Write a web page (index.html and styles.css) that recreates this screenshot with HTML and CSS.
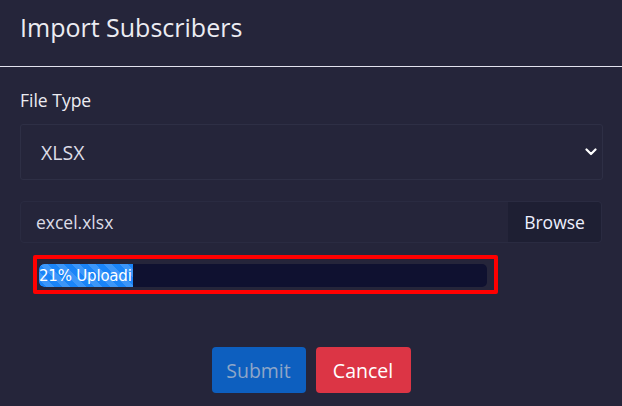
FILE: index.html
```html
<!DOCTYPE html>
<html>
<head>
<meta charset="utf-8">
<link rel="stylesheet" href="styles.css">
</head>
<body>
<div class="modal">
  <div class="header"><h1 class="title">Import Subscribers</h1></div>
  <div class="content">
    <div class="label">File Type</div>
    <div class="select">
      <span class="select-value">XLSX</span>
      <svg class="chevron" width="12" height="8" viewBox="0 0 12 8"><path d="M1.5 1.5 L6 6 L10.5 1.5" fill="none" stroke="#ffffff" stroke-width="2.2" stroke-linecap="round" stroke-linejoin="round"/></svg>
    </div>
    <div class="file">
      <span class="file-name">excel.xlsx</span>
      <span class="browse">Browse</span>
    </div>
    <div class="progress-frame">
      <div class="track">
        <div class="fill" style="width:94px"><span class="fill-text">21% Uploadi</span></div>
      </div>
    </div>
    <div class="actions">
      <button class="btn btn-submit">Submit</button>
      <button class="btn btn-cancel">Cancel</button>
    </div>
  </div>
</div>
</body>
</html>
```
FILE: styles.css
```css
html, body {
  margin: 0;
  padding: 0;
  background: #25253a;
  width: 622px;
  height: 406px;
  overflow: hidden;
}
.modal {
  font-family: "Open Sans", "Lato", sans-serif;
  color: #e6e6ee;
}
.header {
  height: 67px;
  box-sizing: border-box;
  border-bottom: 1px solid #e2e2ee;
  display: flex;
  align-items: center;
  padding: 0 20px 12px;
}
.title {
  margin: 0;
  font-size: 25px;
  line-height: 32px;
  font-weight: 400;
  color: #ececf2;
}
.content {
  padding: 0 20px;
}
.label {
  margin-top: 22px;
  font-size: 17.5px;
  line-height: 22px;
  color: #ececf2;
}
.select {
  margin-top: 13px;
  height: 56px;
  box-sizing: border-box;
  border: 1px solid #2e2f45;
  border-radius: 3px;
  display: flex;
  align-items: center;
  justify-content: space-between;
  padding: 0 5px 0 20px;
  width: 583px;
}
.select-value {
  font-size: 19.5px;
  color: #dcdce6;
}
.chevron {
  display: block;
}
.file {
  margin-top: 21px;
  height: 42px;
  width: 582px;
  box-sizing: border-box;
  border: 1px solid #2a2b41;
  border-radius: 4px;
  display: flex;
  align-items: stretch;
  justify-content: space-between;
}
.file-name {
  display: flex;
  align-items: center;
  padding-left: 15px;
  font-size: 17.5px;
  color: #dcdce6;
}
.browse {
  display: flex;
  align-items: center;
  padding: 0;
  width: 93px;
  box-sizing: border-box;
  justify-content: center;
  background: #1e1f33;
  border-radius: 0 4px 4px 0;
  font-size: 17.5px;
  color: #eef0ff;
}
.progress-frame {
  margin: 12px 0 0 13px;
  width: 465px;
  height: 39px;
  box-sizing: border-box;
  border: 4px solid #ff0000;
  border-radius: 2px;
  padding: 5px 7px 3px 2px;
}
.track {
  height: 23px;
  background: #0f1130;
  border-radius: 5px;
  overflow: hidden;
  display: flex;
}
.fill {
  height: 100%;
  white-space: nowrap;
  background-color: #1a84f8;
  background-image: linear-gradient(45deg, rgba(255,255,255,0.15) 25%, transparent 25%, transparent 50%, rgba(255,255,255,0.15) 50%, rgba(255,255,255,0.15) 75%, transparent 75%, transparent);
  background-size: 16px 16px;
  border-radius: 5px 0 0 5px;
  display: flex;
  align-items: center;
}
.fill-text {
  font-family: "DejaVu Sans", sans-serif;
  font-size: 15px;
  letter-spacing: -0.2px;
  color: #ffffff;
}
.actions {
  margin-top: 53px;
  display: flex;
  justify-content: center;
  gap: 10px;
}
.btn {
  height: 46px;
  width: 94px;
  border: none;
  border-radius: 4px;
  font-family: "Open Sans", "Lato", sans-serif;
  font-size: 19.5px;
  padding: 0;
}
.btn-submit {
  background: #0d5fbf;
  color: #8ea6c8;
}
.btn-cancel {
  width: 95px;
  background: #dc3545;
  color: #ffffff;
}
```
